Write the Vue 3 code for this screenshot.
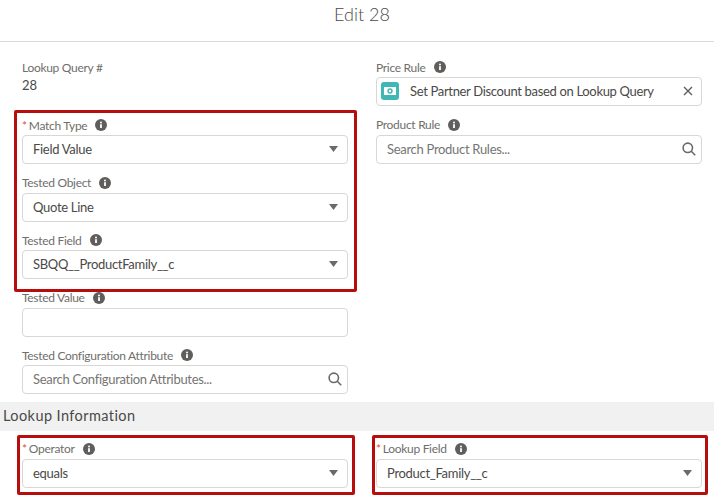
<template>
  <div class="page">
    <header class="modal-header">Edit 28</header>

    <div class="form-row">
      <div class="form-col">
        <div class="readonly">
          <div class="field-label">Lookup Query #</div>
          <div class="readonly-value">28</div>
        </div>
        <div v-for="f in leftFields" :key="f.label" class="field">
          <div class="field-label">
            <span v-if="f.required" class="req">*</span>{{ f.label }}
            <svg class="info" viewBox="0 0 12 12"><circle cx="6" cy="6" r="6" /><rect class="info-i" x="5.1" y="5.2" width="1.8" height="3.8" /><circle class="info-i" cx="6" cy="3.6" r="1" /></svg>
          </div>
          <div class="control" :class="{ placeholder: f.type === 'search' }">
            <span class="control-text">{{ f.value }}</span>
            <svg v-if="f.type === 'select'" class="caret" viewBox="0 0 9 6"><path d="M0 0h9L4.5 6z" /></svg>
            <svg v-if="f.type === 'search'" class="search" viewBox="0 0 14 14"><circle cx="5.8" cy="5.8" r="4.7" /><path d="M9.3 9.3L13.2 13.2" /></svg>
          </div>
        </div>
      </div>

      <div class="form-col">
        <div class="field">
          <div class="field-label">
            Price Rule
            <svg class="info" viewBox="0 0 12 12"><circle cx="6" cy="6" r="6" /><rect class="info-i" x="5.1" y="5.2" width="1.8" height="3.8" /><circle class="info-i" cx="6" cy="3.6" r="1" /></svg>
          </div>
          <div class="control pill">
            <span class="pill-icon">
              <svg viewBox="0 0 18 18"><path class="bill" fill-rule="evenodd" d="M3 5h12v8H3z M9 6.3a2.7 2.7 0 1 0 0 5.4 2.7 2.7 0 0 0 0-5.4z" /><circle class="bill" cx="9" cy="9" r="1.2" /></svg>
            </span>
            <span class="control-text">Set Partner Discount based on Lookup Query</span>
            <svg class="close" viewBox="0 0 10 10"><path d="M1 1l8 8M9 1l-8 8" /></svg>
          </div>
        </div>
        <div class="field">
          <div class="field-label">
            Product Rule
            <svg class="info" viewBox="0 0 12 12"><circle cx="6" cy="6" r="6" /><rect class="info-i" x="5.1" y="5.2" width="1.8" height="3.8" /><circle class="info-i" cx="6" cy="3.6" r="1" /></svg>
          </div>
          <div class="control placeholder">
            <span class="control-text">Search Product Rules...</span>
            <svg class="search" viewBox="0 0 14 14"><circle cx="5.8" cy="5.8" r="4.7" /><path d="M9.3 9.3L13.2 13.2" /></svg>
          </div>
        </div>
      </div>
    </div>

    <div class="section-title">Lookup Information</div>

    <div class="form-row">
      <div v-for="f in lookupFields" :key="f.label" class="form-col">
        <div class="field">
          <div class="field-label">
            <span class="req">*</span>{{ f.label }}
            <svg class="info" viewBox="0 0 12 12"><circle cx="6" cy="6" r="6" /><rect class="info-i" x="5.1" y="5.2" width="1.8" height="3.8" /><circle class="info-i" cx="6" cy="3.6" r="1" /></svg>
          </div>
          <div class="control">
            <span class="control-text">{{ f.value }}</span>
            <svg class="caret" viewBox="0 0 9 6"><path d="M0 0h9L4.5 6z" /></svg>
          </div>
        </div>
      </div>
    </div>

    <!-- red annotation boxes drawn on top of the screenshot -->
    <div class="mark mark-match"></div>
    <div class="mark mark-operator"></div>
    <div class="mark mark-lookup"></div>
  </div>
</template>

<script setup>
const leftFields = [
  { label: 'Match Type', value: 'Field Value', type: 'select', required: true },
  { label: 'Tested Object', value: 'Quote Line', type: 'select' },
  { label: 'Tested Field', value: 'SBQQ__ProductFamily__c', type: 'select' },
  { label: 'Tested Value', value: '', type: 'text' },
  { label: 'Tested Configuration Attribute', value: 'Search Configuration Attributes...', type: 'search' }
]

const lookupFields = [
  { label: 'Operator', value: 'equals' },
  { label: 'Lookup Field', value: 'Product_Family__c' }
]
</script>

<style>
html, body {
  margin: 0;
  background: #fff;
}
</style>

<style scoped>
.page {
  position: relative;
  width: 714px;
  height: 501px;
  overflow: hidden;
  background: #fff;
  font-family: Lato, "Open Sans", sans-serif;
}

.modal-header {
  height: 41px;
  line-height: 29px;
  border-bottom: 1px solid #dddbda;
  text-align: center;
  font-size: 18px;
  font-weight: 300;
  color: #4a4947;
  padding-left: 10px;
}

.form-row {
  display: grid;
  grid-template-columns: 326px 326px;
  column-gap: 28px;
  padding: 0 12px 0 22px;
}

.form-row:first-of-type {
  padding-top: 15px;
}

.readonly {
  height: 58px;
}

.readonly-value {
  font-size: 13px;
  line-height: 16px;
  color: #4a4947;
}

.field {
  margin-bottom: 8.5px;
}

.field-label {
  display: flex;
  align-items: center;
  height: 20px;
  font-size: 12px;
  letter-spacing: -0.3px;
  color: #706e6b;
}

.req {
  color: #d5524d;
  margin-right: 2px;
}

.info {
  width: 12px;
  height: 12px;
  margin-left: 8px;
  fill: #5f5e5c;
}

.info .info-i {
  fill: #fff;
}

.control {
  display: flex;
  align-items: center;
  box-sizing: border-box;
  height: 29px;
  padding: 0 8px 1px 10px;
  border: 1px solid #d9d7d5;
  border-radius: 4px;
  background: #fff;
  font-size: 13px;
  letter-spacing: -0.3px;
  color: #4a4947;
}

.control-text {
  flex: 1;
  white-space: nowrap;
}

.placeholder {
  color: #767573;
}

.caret {
  width: 9px;
  height: 6px;
  margin-right: 1px;
  fill: #6b6a68;
}

.search {
  width: 14px;
  height: 14px;
  margin-right: -3px;
  fill: none;
  stroke: #6b6a68;
  stroke-width: 1.6;
}

.pill {
  padding-left: 4px;
}

.pill-icon {
  display: flex;
  width: 18px;
  height: 18px;
  margin-right: 11px;
  border-radius: 3px;
  background: #3fb8b5;
}

.pill-icon svg {
  width: 18px;
  height: 18px;
}

.pill .control-text {
  letter-spacing: -0.33px;
}

.bill {
  fill: #fff;
}

.close {
  width: 10px;
  height: 10px;
  fill: none;
  stroke: #5f5e5c;
  stroke-width: 1.4;
}

.section-title {
  height: 29px;
  line-height: 28px;
  margin-top: -1px;
  margin-bottom: 8px;
  padding-left: 3px;
  background: #f1f1f1;
  font-size: 14.5px;
  letter-spacing: 0.42px;
  color: #4a4947;
}

.mark {
  position: absolute;
  box-sizing: border-box;
  border: 3px solid #b80d0d;
  border-radius: 2px;
}

.mark-match {
  left: 14px;
  top: 110px;
  width: 343px;
  height: 182px;
}

.mark-operator {
  left: 17px;
  top: 435px;
  width: 338px;
  height: 60px;
}

.mark-lookup {
  left: 372px;
  top: 435px;
  width: 336px;
  height: 60px;
}
</style>
